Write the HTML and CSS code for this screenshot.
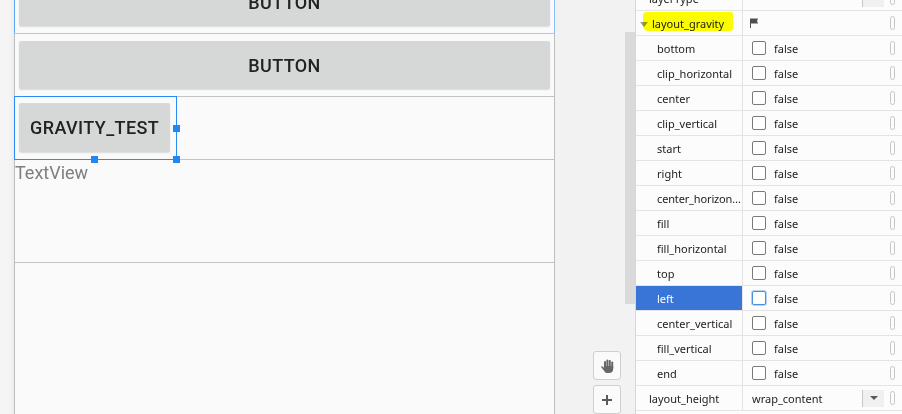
FILE: index.html
```html
<!DOCTYPE html>
<html lang="en">
<head>
<meta charset="utf-8">
<title>Layout editor</title>
<link rel="stylesheet" href="styles.css">
</head>
<body>
<div class="app">
  <div class="margin-strip"></div>

  <div class="device">
    <div class="slot slot-top">
      <div class="btn btn-wide">BUTTON</div>
      <div class="sel-top"></div>
    </div>
    <div class="slot slot-btn">
      <div class="btn btn-wide">BUTTON</div>
    </div>
    <div class="slot slot-btn slot-sel">
      <div class="btn btn-gravity">GRAVITY_TEST</div>
      <div class="sel-box">
        <span class="handle h-right"></span>
        <span class="handle h-bottom"></span>
        <span class="handle h-corner"></span>
      </div>
    </div>
    <div class="slot slot-text">
      <span class="textview">TextView</span>
    </div>
  </div>

  <div class="gutter">
    <div class="thumb"></div>
    <div class="tools">
      <div class="tool">
        <svg width="16" height="16" viewBox="0 0 16 16" aria-hidden="true"><g fill="#676767">
          <rect x="5" y="3" width="2" height="7" rx="1"/>
          <rect x="7.4" y="1.5" width="2" height="8" rx="1"/>
          <rect x="9.8" y="2" width="2" height="8" rx="1"/>
          <rect x="12.2" y="3.5" width="2" height="7" rx="1"/>
          <path d="M5 8 H14.2 V11 C14.2 13.5 12.5 15 10 15 H8.5 C7.2 15 6.3 14.4 5.6 13.4 L2.3 9.2 C1.9 8.6 2.6 7.9 3.2 8.3 L5 9.8 Z"/>
        </g></svg>
      </div>
      <div class="tool">
        <svg width="12" height="12" viewBox="0 0 12 12" aria-hidden="true"><path d="M6 1 V11 M1 6 H11" stroke="#5a5a5a" stroke-width="2"/></svg>
      </div>
    </div>
  </div>

  <div class="panel">
    <div class="row row-first">
      <div class="name"><span>layerType</span></div>
      <div class="value"><span class="val-text"></span><span class="dd"><span class="arrow"></span></span><span class="pill"></span></div>
    </div>
    <div class="row row-group">
      <div class="name name-group"><span class="tri"></span><span>layout_gravity</span><span class="marker"></span></div>
      <div class="value value-flag">
        <svg class="flag" width="10" height="10" viewBox="0 0 10 10" aria-hidden="true"><path d="M1 0.5 H9 L8 3 L9 5.5 H2 V10 H1 Z" fill="#4f4f4f"/></svg>
        <span class="val-text"></span><span class="pill"></span>
      </div>
    </div>
    <div class="row"><div class="name sub"><span>bottom</span></div><div class="value"><span class="cb"></span><span class="val-text">false</span><span class="pill"></span></div></div>
    <div class="row"><div class="name sub"><span>clip_horizontal</span></div><div class="value"><span class="cb"></span><span class="val-text">false</span><span class="pill"></span></div></div>
    <div class="row"><div class="name sub"><span>center</span></div><div class="value"><span class="cb"></span><span class="val-text">false</span><span class="pill"></span></div></div>
    <div class="row"><div class="name sub"><span>clip_vertical</span></div><div class="value"><span class="cb"></span><span class="val-text">false</span><span class="pill"></span></div></div>
    <div class="row"><div class="name sub"><span>start</span></div><div class="value"><span class="cb"></span><span class="val-text">false</span><span class="pill"></span></div></div>
    <div class="row"><div class="name sub"><span>right</span></div><div class="value"><span class="cb"></span><span class="val-text">false</span><span class="pill"></span></div></div>
    <div class="row"><div class="name sub name-tight"><span>center_horizontal</span></div><div class="value"><span class="cb"></span><span class="val-text">false</span><span class="pill"></span></div></div>
    <div class="row"><div class="name sub"><span>fill</span></div><div class="value"><span class="cb"></span><span class="val-text">false</span><span class="pill"></span></div></div>
    <div class="row"><div class="name sub"><span>fill_horizontal</span></div><div class="value"><span class="cb"></span><span class="val-text">false</span><span class="pill"></span></div></div>
    <div class="row"><div class="name sub"><span>top</span></div><div class="value"><span class="cb"></span><span class="val-text">false</span><span class="pill"></span></div></div>
    <div class="row row-selected"><div class="name sub"><span>left</span></div><div class="value"><span class="cb cb-focus"></span><span class="val-text">false</span><span class="pill"></span></div></div>
    <div class="row"><div class="name sub"><span>center_vertical</span></div><div class="value"><span class="cb"></span><span class="val-text">false</span><span class="pill"></span></div></div>
    <div class="row"><div class="name sub"><span>fill_vertical</span></div><div class="value"><span class="cb"></span><span class="val-text">false</span><span class="pill"></span></div></div>
    <div class="row"><div class="name sub"><span>end</span></div><div class="value"><span class="cb"></span><span class="val-text">false</span><span class="pill"></span></div></div>
    <div class="row">
      <div class="name"><span>layout_height</span></div>
      <div class="value"><span class="val-text">wrap_content</span><span class="dd"><span class="arrow"></span></span><span class="pill"></span></div>
    </div>
  </div>
</div>
</body>
</html>
```

FILE: styles.css
```css
html, body {
  margin: 0;
  padding: 0;
}

body {
  width: 902px;
  height: 414px;
  overflow: hidden;
  background: #f3f3f3;
}

.app {
  display: flex;
  height: 414px;
  overflow: hidden;
}

.margin-strip {
  width: 14px;
  flex: none;
  background: linear-gradient(to right, #f5f5f5 0, #f4f4f4 10px, #ececec 14px);
}

/* ---------- device canvas ---------- */
.device {
  width: 539px;
  flex: none;
  border-left: 1px solid #bebebe;
  border-right: 1px solid #bebebe;
  background: #fafafa;
  display: flex;
  flex-direction: column;
}

.slot {
  position: relative;
  display: flex;
  flex: none;
  border-bottom: 1px solid #c3c3c3;
}

.slot-top {
  height: 33px;
  align-items: flex-end;
}

.slot-top .btn {
  margin-bottom: 7px;
}

.slot-btn {
  height: 62px;
  align-items: flex-start;
}

.slot-btn .btn {
  margin-top: 7px;
}

.slot-sel .btn {
  margin-top: 6px;
  height: 49px;
}

.slot-text {
  height: 102px;
  align-items: flex-start;
}

.btn {
  height: 48px;
  flex: none;
  box-sizing: border-box;
  margin-left: 4px;
  background: #d6d7d7;
  border-radius: 2px;
  box-shadow: 0 1px 1.5px rgba(0, 0, 0, 0.13);
  font-family: Roboto, "Noto Sans", sans-serif;
  font-weight: 500;
  font-size: 18px;
  letter-spacing: 0.4px;
  color: #222;
  display: flex;
  align-items: center;
  justify-content: center;
}

.btn-wide {
  flex: 1;
  margin-right: 4px;
}

.btn-gravity {
  padding: 0 11px;
}

.textview {
  padding-top: 2px;
  font-family: Roboto, "Noto Sans", sans-serif;
  font-size: 18px;
  line-height: 21px;
  color: #7f7f7f;
}

/* selection overlays */
.sel-top {
  position: absolute;
  left: -1px;
  right: -1px;
  top: 0;
  height: 33px;
  border-left: 1px solid #5ea7f4;
  border-right: 1px dotted #7fb6ee;
}

.sel-box {
  position: absolute;
  left: -1px;
  top: -1px;
  width: 161px;
  height: 62px;
  border: 1px solid #2a8bf5;
}

.handle {
  position: absolute;
  width: 7px;
  height: 7px;
  background: #1f88f5;
}

.h-right {
  left: 158px;
  top: 28px;
}

.h-bottom {
  left: 76px;
  top: 59px;
}

.h-corner {
  left: 158px;
  top: 59px;
}

/* ---------- gutter ---------- */
.gutter {
  width: 80px;
  flex: none;
  background: #f2f2f2;
  display: flex;
  flex-direction: column;
}

.thumb {
  align-self: flex-end;
  width: 10px;
  height: 276px;
  margin-top: 32px;
  background: #dadada;
}

.tools {
  margin-top: 47px;
  margin-left: 38px;
  display: flex;
  flex-direction: column;
  gap: 5px;
}

.tool {
  width: 28px;
  height: 29px;
  box-sizing: border-box;
  border: 1px solid #cfcfcf;
  border-radius: 3px;
  background: #fafafa;
  display: flex;
  align-items: center;
  justify-content: center;
}

/* ---------- properties panel ---------- */
.panel {
  width: 266px;
  flex: none;
  border-left: 1px solid #d6d6d6;
  background: #fcfcfc;
  display: flex;
  flex-direction: column;
  font-family: "Noto Sans", "Open Sans", sans-serif;
  font-size: 11px;
  color: #222;
}

.row {
  display: flex;
  flex: none;
  height: 24px;
  border-bottom: 1px solid #e4e4e4;
}

.row-first {
  margin-top: -14px;
}

.name {
  width: 107px;
  flex: none;
  box-sizing: border-box;
  border-right: 1px solid #e4e4e4;
  padding-left: 13px;
  display: flex;
  align-items: center;
  white-space: nowrap;
  overflow: hidden;
}

.name span {
  overflow: hidden;
  text-overflow: ellipsis;
  min-width: 0;
}

.name.sub {
  padding-left: 21px;
}

.name-tight span {
  letter-spacing: -0.15px;
}

.name-group {
  position: relative;
  padding-left: 4px;
  overflow: visible;
}

.tri {
  flex: none;
  width: 0;
  height: 0;
  border-left: 4px solid transparent;
  border-right: 4px solid transparent;
  border-top: 5px solid #9a9a9a;
  margin-right: 4px;
  margin-top: 2px;
}

.marker {
  position: absolute;
  left: 7px;
  top: 1px;
  width: 90px;
  height: 19px;
  background: #ffff00;
  border-radius: 4px 2px 3px 5px;
  mix-blend-mode: multiply;
}

.row-selected .name {
  background: #3875d7;
  color: #fff;
}

.value {
  flex: 1;
  min-width: 0;
  display: flex;
  align-items: center;
  padding-left: 9px;
}

.value-flag {
  padding-left: 6px;
}

.flag {
  flex: none;
  margin-top: -1px;
}

.val-text {
  flex: 1;
  white-space: nowrap;
}

.cb {
  flex: none;
  width: 14px;
  height: 14px;
  box-sizing: border-box;
  border: 1px solid #7a7a7a;
  border-radius: 2px;
  background: #fff;
  margin-right: 8px;
}

.cb-focus {
  border-color: #4a8fe0;
  box-shadow: 0 0 0 1px #b5d3f5;
}

.dd {
  flex: none;
  width: 21px;
  height: 17px;
  border-left: 1px solid #c8c8c8;
  background: #f0f0f0;
  margin-right: 6px;
  display: flex;
  align-items: center;
  justify-content: center;
}

.arrow {
  width: 0;
  height: 0;
  border-left: 4px solid transparent;
  border-right: 4px solid transparent;
  border-top: 4px solid #595959;
}

.pill {
  flex: none;
  width: 5px;
  height: 14px;
  box-sizing: border-box;
  border: 1px solid #c6c6c6;
  border-radius: 3px;
  margin-right: 7px;
}
```
